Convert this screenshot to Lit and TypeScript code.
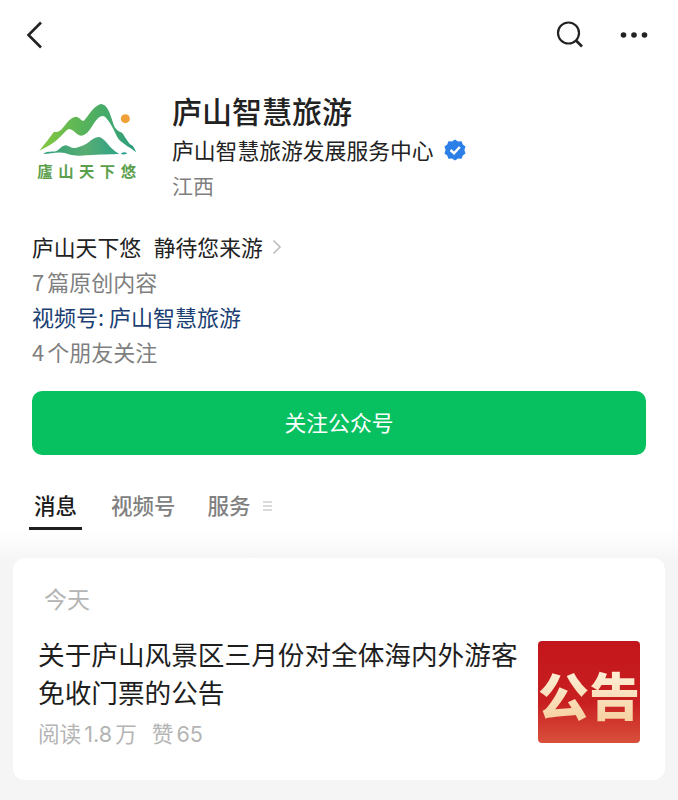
import { LitElement, html, css } from "lit";
import { customElement } from "lit/decorators.js";

@customElement("app-root")
export class AppRoot extends LitElement {
  static styles = css`
    :host {
      display: block;
      width: 678px;
      height: 800px;
      overflow: hidden;
      background: #f6f6f6;
      font-family: "Noto Sans CJK SC", "Liberation Sans", sans-serif;
      color: #1c1c1c;
    }
    .top {
      background: #fff;
      height: 530px;
      display: flex;
      flex-direction: column;
    }
    .nav {
      height: 70px;
      display: flex;
      align-items: center;
      padding: 0 30px 0 25px;
      flex: none;
    }
    .nav .sp { flex: 1; }
    .nav svg { display: block; }
    .search { margin-right: 36px; }
    .profile {
      display: flex;
      height: 159px;
      padding: 23px 0 0 36px;
      box-sizing: border-box;
      flex: none;
    }
    .logo { width: 104px; height: 78px; margin-top: 9px; flex: none; }
    .logo-text { fill: #5b9f4d; font-weight: 700; font-size: 46px; }
    .names { margin-left: 32px; }
    .name { font-size: 30px; font-weight: 500; line-height: 38px; height: 38px; color: #222; margin-top: -2px; }
    .org {
      display: flex;
      align-items: center;
      font-size: 21.8px;
      line-height: 36px;
      margin-top: 3px;
      color: #222;
    }
    .org svg { margin-left: 10px; }
    .region { font-size: 21px; line-height: 36px; color: #7f7f7f; margin-top: -1px; }
    .info { padding-left: 32px; font-size: 22px; line-height: 35px; flex: none; }
    .intro { display: flex; align-items: center; color: #222; white-space: pre; font-size: 21.8px; word-spacing: 1.5px; }
    .intro svg { margin-left: 9px; }
    .muted { color: #7f7f7f; word-spacing: -2px; }
    .link { color: #1b3f73; }
    .follow {
      margin: 22px 32px 0;
      height: 64px;
      padding-bottom: 3px;
      box-sizing: border-box;
      border-radius: 10px;
      background: #07c160;
      color: #fff;
      font-size: 21.8px;
      font-weight: 400;
      display: flex;
      align-items: center;
      justify-content: center;
      flex: none;
    }
    .tabs {
      display: flex;
      align-items: flex-start;
      margin-top: 31px;
      padding-left: 29px;
      font-size: 21.5px;
      line-height: 38px;
      color: #808080;
      font-weight: 500;
      flex: none;
    }
    .tab { height: 41px; }
    .tab.on {
      width: 53px;
      text-align: center;
      color: #1c1c1c;
      border-bottom: 3px solid #1f1f1f;
    }
    .tab.video { margin-left: 29px; }
    .tab.svc { margin-left: 32px; }
    .more { margin: 15px 0 0 12px; }
    .lower {
      height: 270px;
      padding: 28px 13px 0;
      box-sizing: border-box;
      background: linear-gradient(#fff, #f5f5f5 32px);
    }
    .card {
      height: 222px;
      background: #fff;
      border-radius: 12px;
      padding: 22px 25px 0 25px;
      box-sizing: border-box;
    }
    .date { font-size: 23px; line-height: 36px; color: #b4b4b4; padding-left: 6px; }
    .row { display: flex; justify-content: space-between; margin-top: 25px; }
    .title { font-size: 26.65px; line-height: 38px; width: 490px; color: #1e1e1e; margin-top: -6px; }
    .meta {
      font-family: "Inter", "Noto Sans CJK SC", sans-serif;
      font-size: 21.6px;
      line-height: 30px;
      color: #b4b4b4;
      margin-top: 8px;
      white-space: pre;
      word-spacing: -3px;
    }
    .meta span { margin-left: 15px; }
    .thumb {
      width: 102px;
      height: 102px;
      border-radius: 4px;
      background: linear-gradient(#c3161c, #c81f20 60%, #d9503c);
      display: flex;
      align-items: center;
      justify-content: center;
      overflow: hidden;
      flex: none;
      margin-left: -3px;
    }
    .thumb span {
      font-size: 51px;
      font-weight: 900;
      line-height: 60px;
      white-space: nowrap;
      margin-top: 3px;
      background: linear-gradient(#fff3de, #f6cf9e);
      -webkit-background-clip: text;
      background-clip: text;
      color: transparent;
    }
  `;

  render() {
    return html`
      <div class="top">
        <div class="nav">
          <svg width="20" height="30" viewBox="0 0 20 30" fill="none" stroke="#222" stroke-width="2.6">
            <path d="M16 2.5 L3.5 15 L16 27.5" />
          </svg>
          <div class="sp"></div>
          <svg class="search" width="28" height="28" viewBox="0 0 28 28" fill="none" stroke="#222" stroke-width="2.2">
            <circle cx="12.5" cy="12" r="10.5" />
            <path d="M20 19.5 L26 25.5" stroke-width="2.6" />
          </svg>
          <svg width="28" height="8" viewBox="0 0 28 8" fill="#222">
            <circle cx="3.5" cy="4" r="2.8" /><circle cx="14" cy="4" r="2.8" /><circle cx="24.5" cy="4" r="2.8" />
          </svg>
        </div>
        <div class="profile">
          <svg class="logo" viewBox="108 66 312 234">
            <defs>
              <linearGradient id="g1" x1="0" x2="1" y1="0" y2="0">
                <stop offset="0" stop-color="#86c83f" />
                <stop offset="0.45" stop-color="#58b45a" />
                <stop offset="1" stop-color="#2c9c80" />
              </linearGradient>
              <linearGradient id="g2" x1="0" x2="1" y1="0" y2="0">
                <stop offset="0" stop-color="#2f9f7c" />
                <stop offset="0.5" stop-color="#58ad72" />
                <stop offset="1" stop-color="#22a08e" />
              </linearGradient>
            </defs>
            <path fill="url(#g1)" d="M118 212 C135 190 150 172 162 155 C172 158 180 155 190 142 C200 128 212 112 228 110 C240 112 245 125 252 122 C262 112 280 78 302 72 C322 72 330 100 338 125 C343 145 352 152 366 158 C376 170 384 190 396 196 C402 202 406 208 408 217 C395 205 372 195 356 178 C345 160 335 130 315 110 C303 104 292 115 282 130 C272 145 262 165 245 167 C230 167 222 148 208 147 C196 150 186 168 168 182 C152 195 135 203 118 212 Z" />
            <path fill="url(#g2)" d="M130 222 C138 214 152 216 168 214 C180 208 186 196 198 196 C208 198 214 206 226 204 C240 200 252 196 264 188 C276 178 286 170 298 171 C312 175 322 192 334 204 C342 212 350 218 358 221 C340 224 300 222 260 226 C235 228 215 228 195 219 C175 214 150 221 130 222 Z M362 221 C370 216 376 216 382 220 C376 224 368 224 362 221 Z" />
            <circle cx="376" cy="116" r="13.5" fill="#efa037" />
            <text class="logo-text" x="112" y="290" textLength="296">廬山天下悠</text>
          </svg>
          <div class="names">
            <div class="name">庐山智慧旅游</div>
            <div class="org">
              庐山智慧旅游发展服务中心
              <svg width="22" height="22" viewBox="0 0 22 22">
                <path fill="#2b7fe6" d="M11 0.5 L14 2.4 L17.6 2.2 L18.8 5.4 L21.5 7.6 L20.4 11 L21.5 14.4 L18.8 16.6 L17.6 19.8 L14 19.6 L11 21.5 L8 19.6 L4.4 19.8 L3.2 16.6 L0.5 14.4 L1.6 11 L0.5 7.6 L3.2 5.4 L4.4 2.2 L8 2.4 Z" />
                <path fill="none" stroke="#fff" stroke-width="2.4" d="M6.5 11 L10 14.2 L15.8 8" />
              </svg>
            </div>
            <div class="region">江西</div>
          </div>
        </div>
        <div class="info">
          <div class="intro">庐山天下悠  静待您来游<svg width="10" height="16" viewBox="0 0 10 16" fill="none" stroke="#bdbdbd" stroke-width="1.6"><path d="M1.5 1.5 L8 8 L1.5 14.5" /></svg></div>
          <div class="muted">7 篇原创内容</div>
          <div class="link">视频号: 庐山智慧旅游</div>
          <div class="muted">4 个朋友关注</div>
        </div>
        <div class="follow">关注公众号</div>
        <div class="tabs">
          <div class="tab on">消息</div>
          <div class="tab video">视频号</div>
          <div class="tab svc">服务</div>
          <svg class="more" width="9" height="10" viewBox="0 0 9 10" stroke="#b5b5b5" stroke-width="1.2">
            <path d="M0 1 H9 M0 5 H9 M0 9 H9" />
          </svg>
        </div>
      </div>
      <div class="lower">
        <div class="card">
          <div class="date">今天</div>
          <div class="row">
            <div>
              <div class="title">关于庐山风景区三月份对全体海内外游客免收门票的公告</div>
              <div class="meta">阅读 1.8 万<span>赞 65</span></div>
            </div>
            <div class="thumb"><span>公告</span></div>
          </div>
        </div>
      </div>
    `;
  }
}
